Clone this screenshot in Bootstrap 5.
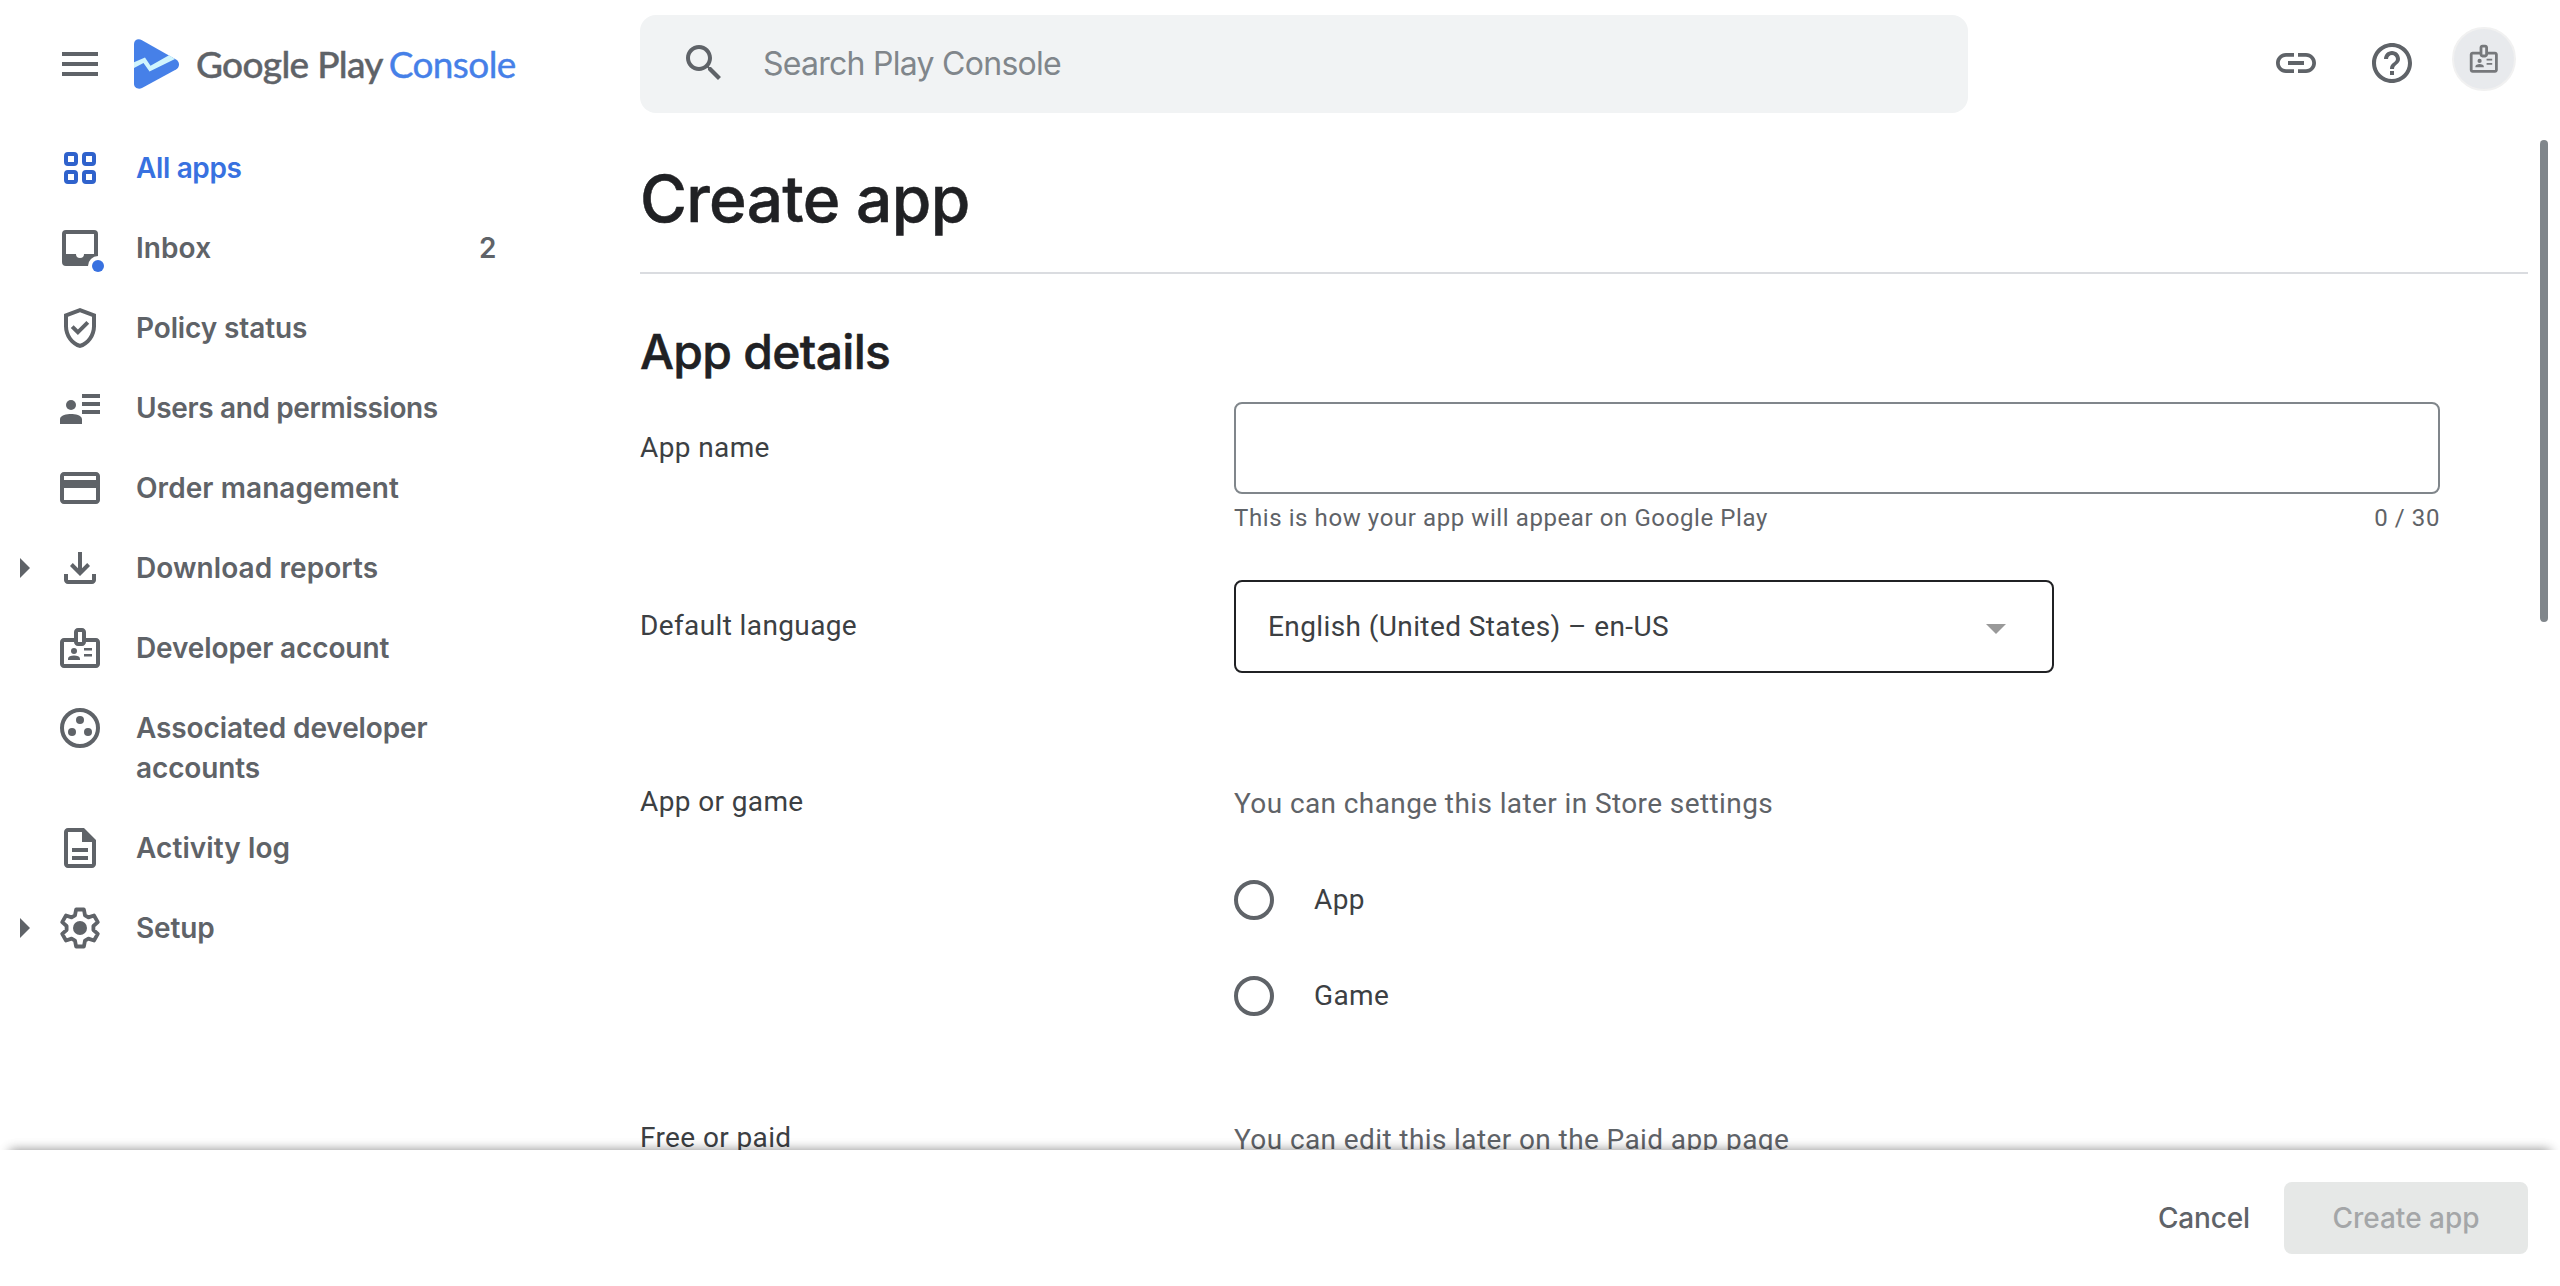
<!DOCTYPE html>
<html lang="en">
<head>
<meta charset="utf-8">
<title>Create app | Google Play Console</title>
<link href="https://cdn.jsdelivr.net/npm/bootstrap@5.3.0/dist/css/bootstrap.min.css" rel="stylesheet">
<style>
  body { font: 28px/40px Roboto, sans-serif; color: #3c4043; background: #fff; }
  .brandface { font-family: Inter, sans-serif; font-weight: 500; }
  .ico { width: 48px; height: 48px; fill: currentColor; flex: none; display: block; }
  .topbar { height: 128px; padding-left: 56px; color: #5f6368; }
  .brand-zone { width: 584px; height: 128px; }
  .play-logo { width: 46px; height: 50px; margin: 0 16px 0 30px; }
  .wordmark { font: 500 37px/48px Lato, sans-serif; letter-spacing: -.66px; white-space: nowrap; -webkit-text-stroke: .4px currentColor; }
  .wordmark b { font-weight: 400; color: #4680e8; margin-left: -2px; letter-spacing: -.6px; }
  .searchbar { width: 1328px; height: 98px; margin-top: 15px; padding-left: 40px; border-radius: 16px; background: #f1f3f4; }
  .searchbar .ico { margin-top: -2px; }
  .searchbar input { font: 400 32px/40px Inter, sans-serif; letter-spacing: -.73px; margin-left: 35px; padding: 0; width: 1000px; }
  .searchbar input::placeholder { color: #80868b; opacity: 1; }
  .tools { padding: 39px 44px 0 0; gap: 48px; }
  .avatar { width: 64px; height: 64px; margin: -12px 0 0 -12px; background: #e8eaed; border: 2px solid #f1f1f1; color: #76787b; }
  .avatar .ico { width: 33.6px; height: 33.6px; }
  .shell { height: 1022px; }
  .sidenav { width: 640px; color: #5f6368; font-weight: 600; }
  .sidenav .nav-link { padding: 16px 0 16px 56px; color: inherit; display: flex; position: relative; font-weight: inherit; }
  .sidenav .nav-link.active { color: #3871e0; }
  .sidenav .nav-link.active .ico { color: #2f62cc; }
  .label-text { width: 312px; margin: 4px 0 4px 32px; }
  .tally { margin: 4px 0 0 31px; }
  .t1 { letter-spacing: -.36px; } .t2 { letter-spacing: -.12px; } .t3 { letter-spacing: .08px; }
  .page { width: 1888px; padding-top: 30px; color: #3c4043; }
  .page h1 { font-size: 64px; line-height: 80px; letter-spacing: -.68px; color: #202124; margin: 0; padding-top: 1px; height: 116px; border-bottom: 2px solid #dadce0; -webkit-text-stroke: .5px currentColor; }
  .page h2 { font-size: 48px; line-height: 60px; letter-spacing: -.7px; color: #202124; margin: 48px 0 20px; -webkit-text-stroke: .5px currentColor; }
  .twisty { position: absolute; left: 20px; top: 30px; border: solid transparent; border-width: 10px 0 10px 10px; border-left-color: #5f6368; }
  .field > :first-child { width: 594px; flex: none; letter-spacing: .38px; }
  .f-name { height: 178px; } .f-lang { height: 201px; } .f-kind { height: 336px; }
  .f-name > :first-child, .f-lang > :first-child { padding-top: 26px; }
  .f-kind > :first-child, .f-price > :first-child { padding-top: 1px; }
  .name-box { width: 1206px; }
  .name-box .form-control { height: 92px; border: 2px solid #80868b; border-radius: 8px; }
  .hint { color: #5f6368; padding-top: 3px; letter-spacing: .4px; }
  .help-line { font-size: 24px; line-height: 32px; letter-spacing: .59px; padding-top: 8px; color: #5f6368; }
  .lang-box { width: 820px; height: 93px; border: 2px solid #202124; border-radius: 8px; padding: 0 46px 0 32px; letter-spacing: .4px; }
  .drop { border: solid transparent; border-width: 10px 10px 0; border-top-color: #999; margin-top: 4px; }
  .picks { padding-top: 28px; }
  .choice { height: 96px; gap: 40px; letter-spacing: .4px; }
  .choice .form-check-input { width: 40px; height: 40px; border: 4px solid #5f6368; margin: 0; float: none; }
  .scroll-thumb { width: 8px; height: 482px; margin: 12px 0 0 12px; background: #80868b; border-radius: 4px; }
  .actions { height: 136px; background: #fff; position: relative; padding: 0 32px 0 0; box-shadow: 0 -10px 10px -10px rgba(0,0,0,.40), 0 -8px 14px -8px rgba(0,0,0,.08); }
  .actions .btn { height: 72px; font-size: 28px; line-height: 40px; border: 0; border-radius: 8px; }
  .btn-flat { color: #5f6368; padding: 16px 34px; letter-spacing: -.15px; }
  .btn-go, .btn-go:disabled { width: 244px; background: #e6e8e7; color: #a4a6a8; opacity: 1; padding: 16px 0; }
</style>
<script src="https://cdn.jsdelivr.net/npm/bootstrap@5.3.0/dist/js/bootstrap.bundle.min.js"></script>
</head>
<body class="overflow-hidden vh-100">
<svg class="d-none">
  <symbol id="badge-id" viewBox="0 0 24 24"><path d="M20 7h-5V4c0-1.1-.9-2-2-2h-2c-1.1 0-2 .9-2 2v3H4c-1.1 0-2 .9-2 2v11c0 1.1.9 2 2 2h16c1.1 0 2-.9 2-2V9c0-1.1-.9-2-2-2zm-9-3h2v5h-2V4zm9 16H4V9h5c0 1.1.9 2 2 2h2c1.1 0 2-.9 2-2h5v11z"/><circle cx="9" cy="13.5" r="1.5"/><path d="M11.08 16.18C10.44 15.9 9.74 15.75 9 15.75s-1.44.15-2.08.43c-.56.24-.92.78-.92 1.39V18h6v-.43c0-.61-.36-1.15-.92-1.39zM14 12h4v1.3h-4zm0 3h4v1.3h-4z"/></symbol>
</svg>

<header class="topbar d-flex align-items-start">
  <div class="brand-zone d-flex align-items-center">
    <svg class="ico" viewBox="0 0 24 24"><path d="M3 6h18v2H3zm0 5h18v2H3zm0 5h18v2H3z"/></svg>
    <svg class="play-logo" viewBox="0 0 46 50"><path fill="#4680e8" d="M0 5C0 1 4-1 8 1.200L42 20.500C46 23 46 28 42 30.500L8 49C4 51 0 48.500 0 45z"/><path fill="#d0f4fd" d="M0 23.300 11 18.500l5.500 8.300L35 16.300l6 3.600L15.500 32.500 9.500 24 0 29z"/></svg>
    <div class="wordmark">Google Play <b>Console</b></div>
  </div>
  <div class="searchbar d-flex align-items-center">
    <svg class="ico" viewBox="0 0 24 24"><path d="M15.500 14h-.79l-.28-.27C15.410 12.590 16 11.110 16 9.500 16 5.910 13.090 3 9.500 3S3 5.910 3 9.500 5.910 16 9.500 16c1.610 0 3.090-.59 4.230-1.570l.27.28v.79l5 4.990L20.490 19l-4.990-5zm-6 0C7.010 14 5 11.990 5 9.500S7.010 5 9.500 5 14 7.010 14 9.500 11.990 14 9.500 14z"/></svg>
    <input class="form-control border-0 bg-transparent shadow-none" placeholder="Search Play Console">
  </div>
  <div class="tools d-flex ms-auto">
    <svg class="ico" viewBox="0 0 24 24"><path d="M3.900 12c0-1.710 1.390-3.100 3.100-3.100h4V7H7c-2.760 0-5 2.240-5 5s2.240 5 5 5h4v-1.900H7c-1.710 0-3.100-1.390-3.100-3.100zM8 13h8v-2H8v2zm9-6h-4v1.900h4c1.710 0 3.100 1.390 3.100 3.100s-1.390 3.100-3.100 3.100h-4V17h4c2.760 0 5-2.240 5-5s-2.240-5-5-5z"/></svg>
    <svg class="ico" viewBox="0 0 24 24"><path d="M11 18h2v-2h-2v2zm1-16C6.480 2 2 6.480 2 12s4.480 10 10 10 10-4.480 10-10S17.520 2 12 2zm0 18c-4.410 0-8-3.590-8-8s3.590-8 8-8 8 3.590 8 8-3.590 8-8 8zm0-14c-2.210 0-4 1.790-4 4h2c0-1.100.9-2 2-2s2 .9 2 2c0 2-3 1.750-3 5h2c0-2.250 3-2.500 3-5 0-2.210-1.790-4-4-4z"/></svg>
    <div class="avatar rounded-circle d-flex align-items-center justify-content-center"><svg class="ico"><use href="#badge-id"/></svg></div>
  </div>
</header>

<div class="shell d-flex overflow-hidden">
  <nav class="sidenav nav flex-column flex-nowrap brandface flex-shrink-0">
    <a class="nav-link active"><svg class="ico" viewBox="0 0 48 48"><g fill="none" stroke="currentColor" stroke-width="4"><rect x="10" y="10" width="10" height="10" rx="2"/><rect x="28" y="10" width="10" height="10" rx="2"/><rect x="10" y="28" width="10" height="10" rx="2"/><rect x="28" y="28" width="10" height="10" rx="2"/></g></svg><span class="label-text t1">All apps</span></a>
    <a class="nav-link"><svg class="ico overflow-visible" viewBox="0 0 48 48"><path fill-rule="evenodd" d="M10 6h28a4 4 0 0 1 4 4v28a4 4 0 0 1-4 4H10a4 4 0 0 1-4-4V10a4 4 0 0 1 4-4zm0 4v20h10a4 4 0 0 0 8 0h10V10z"/><circle cx="42" cy="42" r="10" fill="#fff"/><circle cx="42" cy="42" r="6" fill="#3871e0"/></svg><span class="label-text t3">Inbox</span><span class="tally">2</span></a>
    <a class="nav-link"><svg class="ico" viewBox="0 0 24 24"><path d="M12 2L4 5v6.090c0 5.050 3.410 9.760 8 10.910 4.590-1.150 8-5.860 8-10.910V5l-8-3zm6 9.090c0 4-2.550 7.700-6 8.830-3.450-1.130-6-4.820-6-8.830v-4.700l6-2.250 6 2.250v4.700zm-9.180-.5L7.400 12l3.540 3.540 5.660-5.660-1.410-1.410-4.240 4.240-2.130-2.120z"/></svg><span class="label-text t2">Policy status</span></a>
    <a class="nav-link"><svg class="ico" viewBox="0 0 24 24"><circle cx="7.500" cy="10.500" r="2.500"/><path d="M7.500 15c1.900 0 5.500.6 5.500 2.600V20H2v-2.400C2 15.600 5.600 15 7.500 15zM13 5h9v2h-9zm0 4h9v2h-9zm0 4h9v2h-9z"/></svg><span class="label-text t1">Users and permissions</span></a>
    <a class="nav-link"><svg class="ico" viewBox="0 0 24 24"><path d="M20 4H4c-1.110 0-1.990.89-1.990 2L2 18c0 1.110.89 2 2 2h16c1.110 0 2-.89 2-2V6c0-1.110-.89-2-2-2zm0 14H4v-6h16v6zm0-10H4V6h16v2z"/></svg><span class="label-text t3">Order management</span></a>
    <a class="nav-link"><i class="twisty"></i><svg class="ico" viewBox="0 0 24 24"><path d="M18 15v3H6v-3H4v3c0 1.100.9 2 2 2h12c1.100 0 2-.9 2-2v-3h-2zM12 16l5-5-1.400-1.450-2.600 2.600V4h-2v8.150l-2.600-2.600L7 11l5 5z"/></svg><span class="label-text t3">Download reports</span></a>
    <a class="nav-link"><svg class="ico"><use href="#badge-id"/></svg><span class="label-text t2">Developer account</span></a>
    <a class="nav-link"><svg class="ico" viewBox="0 0 24 24"><circle cx="12" cy="12" r="9" fill="none" stroke="currentColor" stroke-width="2"/><circle cx="12" cy="8" r="2"/><circle cx="8" cy="14" r="2"/><circle cx="16" cy="14" r="2"/></svg><span class="label-text t2">Associated developer accounts</span></a>
    <a class="nav-link"><svg class="ico" viewBox="0 0 24 24"><path d="M8 16h8v2H8zm0-4h8v2H8zm6-10H6c-1.100 0-2 .9-2 2v16c0 1.100.89 2 1.990 2H18c1.100 0 2-.9 2-2V8l-6-6zm4 18H6V4h7v5h5v11z"/></svg><span class="label-text t3">Activity log</span></a>
    <a class="nav-link"><i class="twisty"></i><svg class="ico" viewBox="-12 -12 24 24"><path fill="none" stroke="currentColor" stroke-width="1.900" stroke-linejoin="round" d="M-2.500-6.300-1.950-9.250H1.950L2.500-6.300 4.200-5.300 7-6.250 8.900-2.950 6.700-1V1L8.900 2.950 7 6.250 4.200 5.300 2.500 6.300 1.950 9.250H-1.950L-2.500 6.300-4.200 5.300-7 6.250-8.900 2.950-6.700 1V-1L-8.900-2.950-7-6.250-4.200-5.300z"/><circle r="3.500"/></svg><span class="label-text t2">Setup</span></a>
  </nav>

  <main class="page flex-shrink-0">
    <h1 class="brandface">Create app</h1>
    <h2 class="brandface">App details</h2>
    <div class="field f-name d-flex">
      <label>App name</label>
      <div class="name-box">
        <input class="form-control shadow-none">
        <div class="help-line d-flex justify-content-between"><span>This is how your app will appear on Google Play</span><span>0 / 30</span></div>
      </div>
    </div>
    <div class="field f-lang d-flex">
      <label>Default language</label>
      <div class="lang-box d-flex align-items-center justify-content-between"><span>English (United States) – en-US</span><i class="drop"></i></div>
    </div>
    <div class="field f-kind d-flex">
      <label>App or game</label>
      <div>
        <div class="hint">You can change this later in Store settings</div>
        <div class="picks">
          <label class="choice d-flex align-items-center"><input class="form-check-input" type="radio" name="kind">App</label>
          <label class="choice d-flex align-items-center"><input class="form-check-input" type="radio" name="kind">Game</label>
        </div>
      </div>
    </div>
    <div class="field f-price d-flex">
      <label>Free or paid</label>
      <div class="hint">You can edit this later on the Paid app page</div>
    </div>
  </main>
  <div class="scroll-thumb flex-shrink-0"></div>
</div>

<footer class="actions d-flex align-items-center justify-content-end brandface">
  <button class="btn btn-flat brandface">Cancel</button>
  <button class="btn btn-go brandface" disabled>Create app</button>
</footer>
</body>
</html>
